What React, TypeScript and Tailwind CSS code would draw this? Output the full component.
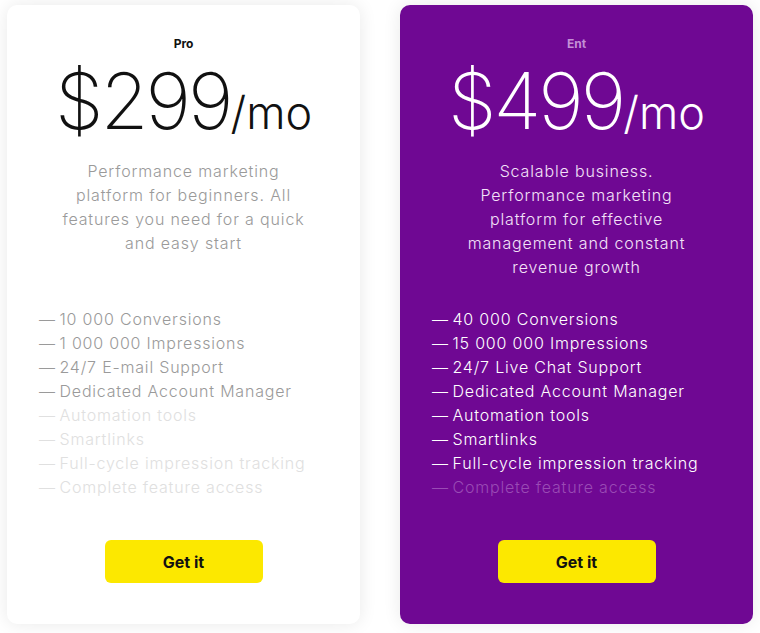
import React from "react";

type Feature = { text: string; on: boolean };

const proFeatures: Feature[] = [
  { text: "10 000 Conversions", on: true },
  { text: "1 000 000 Impressions", on: true },
  { text: "24/7 E-mail Support", on: true },
  { text: "Dedicated Account Manager", on: true },
  { text: "Automation tools", on: false },
  { text: "Smartlinks", on: false },
  { text: "Full-cycle impression tracking", on: false },
  { text: "Complete feature access", on: false },
];

const entFeatures: Feature[] = [
  { text: "40 000 Conversions", on: true },
  { text: "15 000 000 Impressions", on: true },
  { text: "24/7 Live Chat Support", on: true },
  { text: "Dedicated Account Manager", on: true },
  { text: "Automation tools", on: true },
  { text: "Smartlinks", on: true },
  { text: "Full-cycle impression tracking", on: true },
  { text: "Complete feature access", on: false },
];

function FeatureList({ items, on, off, mt }: { items: Feature[]; on: string; off: string; mt: string }) {
  return (
    <ul className={"self-start ml-[32px] text-[16px] leading-[24px] font-light " + mt}>
      {items.map((f) => (
        <li key={f.text} className={f.on ? on : off}>
          <span className="tracking-normal">{"\u2014 "}</span>
          <span className="tracking-[0.8px]">{f.text}</span>
        </li>
      ))}
    </ul>
  );
}

export default function App() {
  return (
    <div
      className="w-[760px] h-[633px] bg-white flex gap-[40px] pl-[7px] pt-[5px] overflow-hidden"
      style={{ fontFamily: "Inter, 'Noto Sans', sans-serif" }}
    >
      {/* Pro card */}
      <div className="w-[353px] h-[619px] rounded-[10px] bg-white shadow-[0_0_18px_rgba(0,0,0,0.09)] flex flex-col items-center">
        <div className="mt-[31px] text-[12px] leading-[16px] font-bold text-[#111]">Pro</div>
        <div className="mt-[2px] h-[94px] flex items-baseline text-[#111]">
          <span className="text-[78px] leading-[94px] font-extralight tracking-[-3px]">$299</span>
          <span className="text-[45px] leading-[94px] font-light">/mo</span>
        </div>
        <div className="mt-[11px] text-[16px] leading-[24px] font-light text-[#9a9a9a] text-center tracking-[0.85px]">
          <div>Performance marketing</div>
          <div>platform for beginners. All</div>
          <div>features you need for a quick</div>
          <div>and easy start</div>
        </div>
        <FeatureList items={proFeatures} on="text-[#9a9a9a]" off="text-[#e0e0e0]" mt="mt-[52px]" />
        <button className="mt-auto mb-[41px] w-[158px] h-[43px] rounded-[6px] bg-[#fce800] text-[16px] font-bold text-[#111]">
          Get it
        </button>
      </div>

      {/* Ent card */}
      <div className="w-[353px] h-[619px] rounded-[10px] bg-[#6f0893] shadow-[0_0_18px_rgba(0,0,0,0.09)] flex flex-col items-center">
        <div className="mt-[31px] text-[12px] leading-[16px] font-bold text-[#c38fd6]">Ent</div>
        <div className="mt-[2px] h-[94px] flex items-baseline text-white">
          <span className="text-[78px] leading-[94px] font-extralight tracking-[-3px]">$499</span>
          <span className="text-[45px] leading-[94px] font-light">/mo</span>
        </div>
        <div className="mt-[11px] text-[16px] leading-[24px] font-light text-[#f4e2f8] text-center tracking-[0.85px]">
          <div>Scalable business.</div>
          <div>Performance marketing</div>
          <div>platform for effective</div>
          <div>management and constant</div>
          <div>revenue growth</div>
        </div>
        <FeatureList items={entFeatures} on="text-white" off="text-[#9a4bb5]" mt="mt-[28px]" />
        <button className="mt-auto mb-[41px] w-[158px] h-[43px] rounded-[6px] bg-[#fce800] text-[16px] font-bold text-[#111]">
          Get it
        </button>
      </div>
    </div>
  );
}
